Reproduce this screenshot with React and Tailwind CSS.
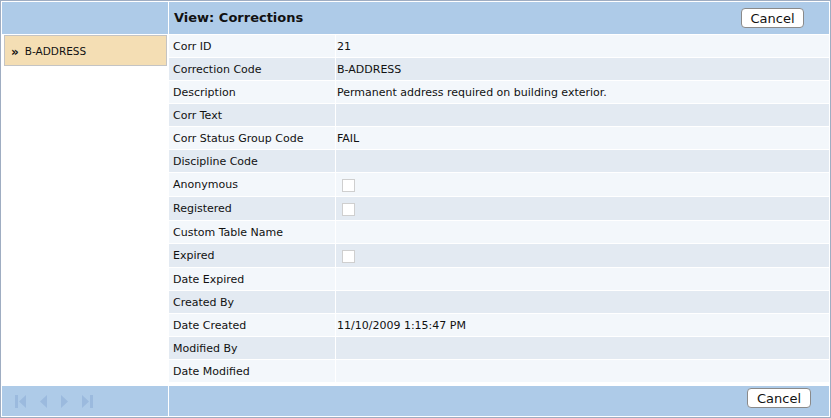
const rows = [
  { label: 'Corr ID', value: '21' },
  { label: 'Correction Code', value: 'B-ADDRESS' },
  { label: 'Description', value: 'Permanent address required on building exterior.' },
  { label: 'Corr Text', value: '' },
  { label: 'Corr Status Group Code', value: 'FAIL' },
  { label: 'Discipline Code', value: '' },
  { label: 'Anonymous', check: true },
  { label: 'Registered', check: true },
  { label: 'Custom Table Name', value: '' },
  { label: 'Expired', check: true },
  { label: 'Date Expired', value: '' },
  { label: 'Created By', value: '' },
  { label: 'Date Created', value: '11/10/2009 1:15:47 PM' },
  { label: 'Modified By', value: '' },
  { label: 'Date Modified', value: '' }
]

function CancelButton({ wide }) {
  return (
    <button
      className={
        'h-[20px] rounded-[4px] border border-[#8a8a8a] bg-white text-[13px] leading-none text-[#111] ' +
        (wide ? 'w-[64px]' : 'w-[63px]')
      }
    >
      Cancel
    </button>
  )
}

function NavIcons() {
  return (
    <div className="flex items-center gap-[12px] pl-[13px] text-[#9bbade]">
      {/* first */}
      <svg width="13" height="13" viewBox="0 0 13 13">
        <rect x="0" y="0" width="3" height="13" fill="currentColor" />
        <path d="M11 0 L4 6.5 L11 13 Z" fill="currentColor" />
      </svg>
      {/* prev */}
      <svg width="8" height="13" viewBox="0 0 8 13">
        <path d="M7 0 L0 6.5 L7 13 Z" fill="currentColor" />
      </svg>
      {/* next */}
      <svg width="8" height="13" viewBox="0 0 8 13">
        <path d="M1 0 L8 6.5 L1 13 Z" fill="currentColor" />
      </svg>
      {/* last */}
      <svg width="13" height="13" viewBox="0 0 13 13">
        <path d="M2 0 L9 6.5 L2 13 Z" fill="currentColor" />
        <rect x="10" y="0" width="3" height="13" fill="currentColor" />
      </svg>
    </div>
  )
}

export default function App() {
  return (
    <div
      className="h-[418px] w-[831px] border border-[#9fadc2] bg-white p-px"
      style={{ fontFamily: '"DejaVu Sans", Verdana, sans-serif' }}
    >
      <div className="grid h-full grid-cols-[166px_1fr] grid-rows-[32px_1fr_30px] gap-px bg-white">
        {/* header */}
        <div className="bg-[#aecbe8]" />
        <div className="flex items-center justify-between bg-[#aecbe8] pl-[5px] pr-[25px]">
          <span className="text-[13px] font-bold text-[#111]">View: Corrections</span>
          <CancelButton />
        </div>

        {/* body */}
        <div className="bg-white pl-[2px] pr-px">
          <div className="flex h-[31px] items-center gap-[6px] border border-[#c4c4c4] bg-[#f4deb4] pl-[6px] pt-[2px] text-[10.5px] text-[#111]">
            <span className="text-[12px] font-bold leading-none">»</span>
            <span>B-ADDRESS</span>
          </div>
        </div>
        <div className="flex flex-col bg-white">
          {rows.map((r, i) => (
            <div
              key={r.label}
              className={
                'grid grid-cols-[166px_1fr] border-b border-white text-[11px] text-[#111] ' +
                (r.check ? 'h-[24px] ' : 'h-[23px] ') +
                (i % 2 === 0 ? 'bg-[#f3f7fb]' : 'bg-[#e3eaf2]')
              }
            >
              <div className="flex items-center pl-[4px] pt-[2px]">{r.label}</div>
              <div className="flex items-center border-l border-white pl-[1px] pt-[2px]">
                {r.check ? (
                  <span className="ml-[5px] block h-[13px] w-[13px] border border-[#cfcfcf] bg-white" />
                ) : (
                  r.value
                )}
              </div>
            </div>
          ))}
        </div>

        {/* footer */}
        <div className="flex items-center bg-[#aecbe8]">
          <NavIcons />
        </div>
        <div className="flex items-start justify-end bg-[#aecbe8] pr-[18px] pt-[2px]">
          <CancelButton wide />
        </div>
      </div>
    </div>
  )
}
